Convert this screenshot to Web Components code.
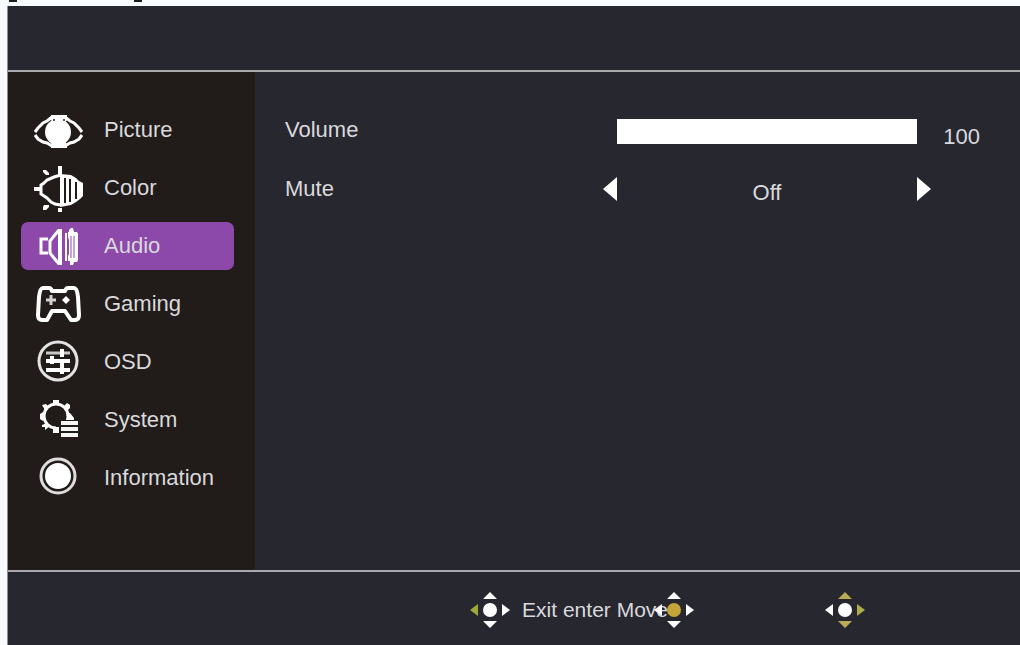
<!DOCTYPE html>
<html lang="en">
<head>
<meta charset="utf-8">
<title>Audio</title>
<style>
    html, body{
        height:100%;
    }

    body{
        margin:0;
        background-color:#f8fbfe;
        font-family:"Liberation Sans", Arial, sans-serif;
        font-size:22px;
        line-height:24px;
        color:#d9d9dc;
    }
</style>
</head>
<body>
<osd-screen>
    <menu-item slot="menu" icon="picture">Picture</menu-item>
    <menu-item slot="menu" icon="color">Color</menu-item>
    <menu-item slot="menu" icon="audio" active>Audio</menu-item>
    <menu-item slot="menu" icon="gaming">Gaming</menu-item>
    <menu-item slot="menu" icon="osd">OSD</menu-item>
    <menu-item slot="menu" icon="system">System</menu-item>
    <menu-item slot="menu" icon="information">Information</menu-item>
    <range-setting name="Volume" value="100"></range-setting>
    <choice-setting name="Mute" options="Off,On"></choice-setting>
    <key-hints slot="footer">Exit enter Move</key-hints>
</osd-screen>

<script>
const icons = {
    picture: `
        <path d="M1 26L4 22L9 17L13 15L18 11M48 26L45 22L40 17L36 15L31 11M1 29L4 33L9 36L13 37L18 40M48 29L45 33L40 36L36 37L31 40" fill="none" stroke="#fff" stroke-width="3"/>
        <circle cx="24" cy="26" r="13" fill="#fff"/>
        <path d="M17 9H33V14L30 18H19L17 14ZM19 34H30L33 38V42H17V38Z" fill="#fff"/>
        <path d="M19 13h2v2h-2zM29 13h2v2h-2z" fill="#5d5755"/>`,
    color: `
        <path d="M27 11L20 13L13 16L10 19L7 21V30L10 32L13 34L17 38L21 40L27 41" fill="none" stroke="#fff" stroke-width="3"/>
        <path d="M26 10L37 11L42 14L45 17L49 19V32L46 35L42 38L37 41L26 43Z" fill="#fff"/>
        <path d="M31 14V39M36 15V38M42 18V35" stroke="#211c1a" stroke-width="2"/>
        <path d="M26 2V11M0 25H7" stroke="#fff" stroke-width="4"/>
        <path d="M9 6H12L15 9V11H12L9 8ZM10 41H15V43L12 46H9V43ZM24 44H28V48H24Z" fill="#fff"/>`,
    audio: `
        <path d="M14 17H7V31H14" fill="none" stroke="#fff" stroke-width="3"/>
        <path d="M25 8L20 14L16 19V31L20 36L25 42" fill="none" stroke="#fff" stroke-width="3"/>
        <path d="M24 7H28V43H24Z" fill="#fff"/>
        <path d="M32 11V39" stroke="#fff" stroke-width="2"/>
        <path d="M34 10H35V8L37 6H39L40 10H43L44 12V38L43 40H40L39 43H36V39H34V34L35 32V18L34 15Z" fill="#fff"/>
        <path d="M37 14V36M40 14V36" stroke="#8c49aa"/>`,
    gaming: `
        <path d="M9 8H15Q17 8 18 11H31Q32 8 34 8H40Q43 8 44 17L45 35Q45 40 41 40H37L31 31H18L13 40H8Q4 40 4 35L5 17Q6 8 9 8Z" fill="none" stroke="#fff" stroke-width="4" stroke-linejoin="round"/>
        <path d="M17 15V25M12 20H22" stroke="#d2d1d1" stroke-width="3"/>
        <path d="M32 16L36 20L32 24L28 20Z" fill="#fff"/>`,
    osd: `
        <circle cx="24" cy="23" r="19" fill="none" stroke="#e4e3e3" stroke-width="3"/>
        <path d="M12 15H36" stroke="#c9c8c8" stroke-width="3"/>
        <path d="M12 23H36M12 32H36M28 11V19M28 23V36M18 18V26" stroke="#fff" stroke-width="4"/>`,
    system: `
        <path d="M34 20A12 12 0 1 0 22 32" fill="none" stroke="#fff" stroke-width="3"/>
        <path d="M19 4H25V9H19ZM30 10L33 7L36 9V12L33 15ZM8 9L12 8L15 11L11 14ZM9 16V25L6 23V18ZM8 29L13 27L16 30L11 34V31H8ZM19 31H25V37H19ZM33 17H36L40 22V24H32Z" fill="#fff"/>
        <path d="M27 25H44V29H27ZM27 31H44V35H27ZM27 37H44V41H27Z" fill="#f6f6f6"/>`,
    information: `
        <circle cx="24" cy="22" r="17" fill="none" stroke="#dedddd" stroke-width="3"/>
        <circle cx="24" cy="22" r="13" fill="#fff"/>`
};

class OsdScreen extends HTMLElement {

    constructor() {
        super();
        this.shadow = this.attachShadow({mode: 'open'});
        this.render();
    }

    render() {

        this.shadow.innerHTML =
        /*html*/
        `
        <style>

            :host{
                display:flex;
                flex-direction: column;
                min-height:100%;
            }

            .caption{
                display:flex;
                gap:117px;
                height:6px;
                padding-left:9px;
            }

            .caption i{
                width:8px;
                height:2px;
                background-color:#1c1c1c;
            }

            .panel{
                flex:1;
                display:grid;
                grid-template-rows: 64px 1fr 73px;
                margin-left:7px;
                border-left:1px solid #8e8e92;
                background-color:#272730;
            }

            .body{
                display:grid;
                grid-template-columns: 247px 1fr;
                border-top:2px solid #a9a8ad;
                border-bottom:2px solid #a9a8ad;
            }

            nav{
                display:flex;
                flex-direction: column;
                gap:10px;
                padding:34px 21px 34px 13px;
                background-color:#211c1a;
            }

            main{
                display:flex;
                flex-direction: column;
                gap:28px;
                padding:46px 40px 46px 30px;
            }
        </style>

        <div class="caption"><i></i><i></i></div>
        <div class="panel">
            <header></header>
            <div class="body">
                <nav><slot name="menu"></slot></nav>
                <main><slot></slot></main>
            </div>
            <slot name="footer"></slot>
        </div>
        `;

    }
}

class MenuItem extends HTMLElement {

    constructor() {
        super();
        this.shadow = this.attachShadow({mode: 'open'});
    }

    connectedCallback() {
        this.render();
    }

    render() {

        const icon = this.getAttribute('icon');

        this.shadow.innerHTML =
        /*html*/
        `
        <style>

            :host{
                display:block;
            }

            a{
                display:flex;
                align-items: center;
                gap:20px;
                height:48px;
                padding-left:13px;
                border-radius:7px;
                color:inherit;
                text-decoration: none;
            }

            :host([active]) a{
                background-color:#8c49aa;
            }

            svg{
                width:50px;
                height:48px;
            }
        </style>

        <a href="#${icon}" ${this.hasAttribute('active') ? 'aria-current="page"' : ''}>
            <svg viewBox="0 0 50 48" aria-hidden="true">${icons[icon]}</svg>
            <span><slot></slot></span>
        </a>
        `;

    }
}

// Shared columns of the setting rows: name, arrow, control, arrow, value
const settingStyle = `
    :host{
        display:grid;
        grid-template-columns: 1fr 14px 300px 14px 49px;
        align-items: start;
        min-height:31px;
    }

    output{
        align-self: end;
    }
`;

class RangeSetting extends HTMLElement {

    constructor() {
        super();
        this.shadow = this.attachShadow({mode: 'open'});
    }

    connectedCallback() {
        this.render();
        const input = this.shadow.querySelector('input');
        const output = this.shadow.querySelector('output');
        input.addEventListener('input', () => {
            output.textContent = input.value;
            input.style.setProperty('--fill', input.value + '%');
        });
    }

    render() {

        const value = this.getAttribute('value');

        this.shadow.innerHTML =
        /*html*/
        `
        <style>
            ${settingStyle}

            input{
                grid-column: 3;
                appearance: none;
                width:100%;
                height:25px;
                margin:1px 0 0;
                background:linear-gradient(#fff, #fff) no-repeat 0 0 / var(--fill) 100% #45454f;
            }

            input::-webkit-slider-thumb{
                appearance: none;
                width:1px;
                height:25px;
                background-color:#fff;
            }

            output{
                grid-column: 5;
                text-align: right;
            }
        </style>

        <label for="range">${this.getAttribute('name')}</label>
        <input id="range" type="range" min="0" max="100" value="${value}" style="--fill:${value}%">
        <output for="range">${value}</output>
        `;

    }
}

class ChoiceSetting extends HTMLElement {

    constructor() {
        super();
        this.shadow = this.attachShadow({mode: 'open'});
        this.index = 0;
    }

    connectedCallback() {
        this.options = this.getAttribute('options').split(',');
        this.render();
        const [previous, next] = this.shadow.querySelectorAll('button');
        previous.addEventListener('click', () => this.step(-1));
        next.addEventListener('click', () => this.step(1));
    }

    step(by) {
        this.index = (this.index + by + this.options.length) % this.options.length;
        this.shadow.querySelector('output').textContent = this.options[this.index];
    }

    render() {

        this.shadow.innerHTML =
        /*html*/
        `
        <style>
            ${settingStyle}

            :host{
                min-height:28px;
            }

            button{
                width:14px;
                height:24px;
                padding:0;
                border:0;
                background:none;
            }

            svg{
                display:block;
                fill:#fff;
            }

            output{
                text-align: center;
            }
        </style>

        <label for="choice">${this.getAttribute('name')}</label>
        <button aria-label="Previous"><svg width="14" height="24"><path d="M14 0V24L0 12Z"/></svg></button>
        <output id="choice">${this.options[this.index]}</output>
        <button aria-label="Next"><svg width="14" height="24"><path d="M0 0V24L14 12Z"/></svg></button>
        `;

    }
}

class KeyHints extends HTMLElement {

    constructor() {
        super();
        this.shadow = this.attachShadow({mode: 'open'});
        this.render();
    }

    pad(name, left, middle, vertical, right) {
        return `
        <svg class="${name}" viewBox="-20 -18 40 36" aria-hidden="true">
            <path d="M-20 0L-12 -6V6Z" fill="${left}"/>
            <path d="M0 -18L7 -11H-7ZM0 18L7 11H-7Z" fill="${vertical}"/>
            <path d="M20 0L12 -6V6Z" fill="${right}"/>
            <circle r="7" fill="${middle}"/>
        </svg>`;
    }

    render() {

        this.shadow.innerHTML =
        /*html*/
        `
        <style>

            :host{
                display:flex;
                align-items: center;
                justify-content: flex-end;
                padding:2px 155px 0 0;
                font-size:21px;
            }

            svg{
                flex:none;
                width:40px;
                height:36px;
            }

            span{
                margin-left:12px;
                white-space: nowrap;
            }

            .enter{
                margin-left:-14px;
                z-index:1;
            }

            .move{
                margin-left:131px;
            }
        </style>

        ${this.pad('exit', '#a0a83c', '#fff', '#fff', '#fff')}
        <span><slot></slot></span>
        ${this.pad('enter', '#fff', '#c3a53a', '#fff', '#fff')}
        ${this.pad('move', '#fff', '#fff', '#b9ab55', '#b0ab4a')}
        `;

    }
}

customElements.define('osd-screen', OsdScreen);
customElements.define('menu-item', MenuItem);
customElements.define('range-setting', RangeSetting);
customElements.define('choice-setting', ChoiceSetting);
customElements.define('key-hints', KeyHints);
</script>
</body>
</html>
